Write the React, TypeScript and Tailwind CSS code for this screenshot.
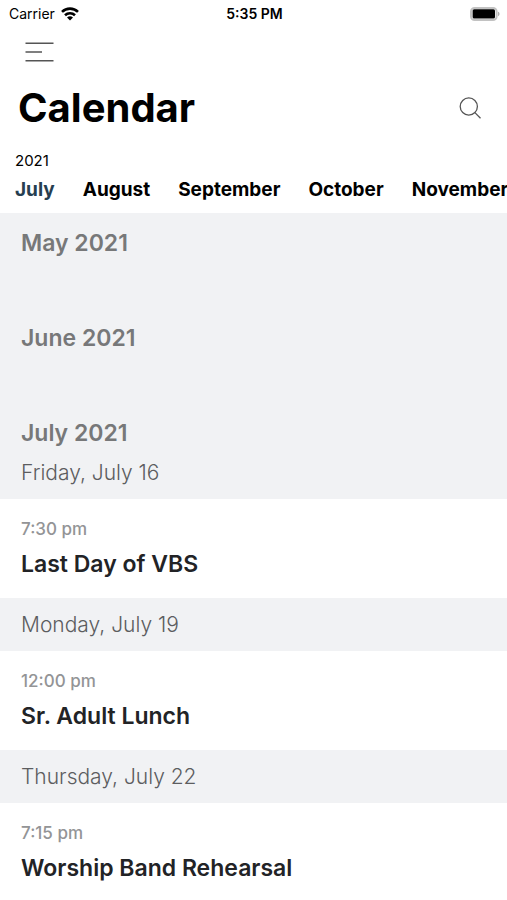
const months = ["July", "August", "September", "October", "November"];

const earlier = ["May 2021", "June 2021"];

const days = [
  { date: "Friday, July 16", time: "7:30 pm", title: "Last Day of VBS" },
  { date: "Monday, July 19", time: "12:00 pm", title: "Sr. Adult Lunch" },
  { date: "Thursday, July 22", time: "7:15 pm", title: "Worship Band Rehearsal" },
];

function WifiIcon() {
  return (
    <svg viewBox="0 0 18 14" className="h-[14px] w-[18px]" fill="none" stroke="#000" strokeWidth="2.6" aria-hidden="true">
      <path d="M1 4.900a11.500 11.500 0 0 1 16 0" />
      <path d="M4 8.200a7.200 7.200 0 0 1 10 0" />
      <path d="M9 13.500 6 10.600a4.300 4.300 0 0 1 6 0Z" fill="#000" stroke="none" />
    </svg>
  );
}

function BatteryIcon() {
  return (
    <svg viewBox="0 0 30 14" className="h-[14px] w-[30px]" aria-hidden="true">
      <rect x="1" y="1" width="25.600" height="12" rx="3.600" fill="none" stroke="#c2c2c2" strokeWidth="2" />
      <rect x="2.600" y="2.200" width="22.400" height="9.400" rx="1.500" fill="#000" />
      <path d="M28 4.800c2 .6 2 3.800 0 4.400Z" fill="#b0b0b0" />
    </svg>
  );
}

export default function App() {
  return (
    <div className="min-h-screen overflow-hidden bg-white font-['Inter',sans-serif] text-black">
      <header>
        <div className="grid h-7 grid-cols-3 items-center pr-[7px] pl-[9px] text-sm">
          <div className="flex items-center gap-[6px]">
            <span>Carrier</span>
            <WifiIcon />
          </div>
          <span className="text-center font-semibold">5:35 PM</span>
          <div className="flex justify-end">
            <BatteryIcon />
          </div>
        </div>
        <button type="button" aria-label="Menu" className="ml-6 block h-12">
          <svg viewBox="0 0 30 20" className="h-5 w-[30px]" stroke="#555" strokeWidth="1.5" aria-hidden="true">
            <path d="M1.500 1.300H29.500M1.500 10H18M1.500 18.700H29.500" />
          </svg>
        </button>
        <div className="flex h-16 items-center justify-between pr-6 pl-[18px]">
          <h1 className="text-[40px] leading-[48px] font-bold">Calendar</h1>
          <button type="button" aria-label="Search">
            <svg viewBox="0 0 24 24" className="size-6" fill="none" stroke="#555" strokeWidth="1.3" aria-hidden="true">
              <circle cx="9.800" cy="10.500" r="8.600" />
              <path d="m15.900 16.600 5.600 5.600" />
            </svg>
          </button>
        </div>
        <nav aria-label="Months" className="h-[73px] pt-[11px] pl-[15px]">
          <p className="text-[15px] leading-5">2021</p>
          <div className="flex gap-7 overflow-hidden text-[19px] leading-[38px] font-bold">
            {months.map((month, i) => (
              <a key={month} href="#" className={i === 0 ? "text-[#263e50]" : "text-black"}>
                {month}
              </a>
            ))}
          </div>
        </nav>
      </header>
      <main>
        <div className="bg-[#f1f2f4] px-[21px] text-[23px] font-semibold text-[#777879]">
          {earlier.map((month) => (
            <h2 key={month} className="h-[95px] pt-3 leading-9">
              {month}
            </h2>
          ))}
          <h2 className="h-[43px] pt-3 leading-9">July 2021</h2>
        </div>
        {days.map((day) => (
          <section key={day.date}>
            <h3 className="flex h-[53px] items-center bg-[#f1f2f4] px-[21px] text-[21px] font-light text-[#5c5d5f]">{day.date}</h3>
            <article className="h-[99px] px-[21px] pt-5">
              <p className="text-[17px] leading-5 font-medium text-[#939496]">{day.time}</p>
              <h4 className="mt-2 text-[23px] leading-[34px] font-semibold text-[#222326]">{day.title}</h4>
            </article>
          </section>
        ))}
      </main>
    </div>
  );
}
